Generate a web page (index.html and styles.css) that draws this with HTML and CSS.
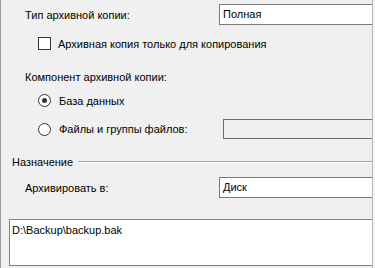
FILE: index.html
```html
<!DOCTYPE html>
<html lang="ru">
<head>
  <meta charset="UTF-8">
  <meta name="viewport" content="width=device-width, initial-scale=1.0">
  <title>Параметры архивации</title>
  <link rel="stylesheet" href="styles.css">
</head>
<body>
  <div class="panel">
    <div class="row row-field">
      <label class="field-label" for="backupType">Тип архивной копии:</label>
      <div class="combo" id="backupType">Полная</div>
    </div>

    <div class="row row-check">
      <input type="checkbox" id="copyOnly" class="check">
      <label for="copyOnly">Архивная копия только для копирования</label>
    </div>

    <div class="row row-caption">Компонент архивной копии:</div>

    <div class="row row-radio first-radio">
      <input type="radio" id="database" name="component" class="radio" checked>
      <label for="database">База данных</label>
    </div>

    <div class="row row-radio second-radio">
      <input type="radio" id="files" name="component" class="radio">
      <label class="radio-label" for="files">Файлы и группы файлов:</label>
      <div class="text-field disabled"></div>
    </div>

    <div class="group-title">Назначение</div>

    <div class="row row-field row-dest">
      <label class="field-label" for="destType">Архивировать в:</label>
      <div class="combo" id="destType">Диск</div>
    </div>

    <div class="dest-list">D:\Backup\backup.bak</div>
  </div>
</body>
</html>
```

FILE: styles.css
```css
body {
  margin: 0;
  background-color: #f7f7f7;
  font-family: "Liberation Sans", Arial, sans-serif;
  font-size: 11px;
  color: #000;
}
.panel {
  width: 371px;
  height: 268px;
  background-color: #f0f0f0;
  border-left: 1px solid #a0a0a0;
  border-right: 1px solid #b4b4b4;
  overflow: hidden;
  box-sizing: content-box;
}
.row {
  display: flex;
  align-items: center;
}
.row-field {
  margin-top: 4px;
  height: 21px;
  padding-left: 24px;
}
.field-label {
  width: 194px;
  flex-shrink: 0;
}
.combo {
  width: 170px;
  height: 21px;
  flex-shrink: 0;
  box-sizing: border-box;
  border: 1px solid #7a7a7a;
  background-color: #fff;
  padding-left: 3px;
  line-height: 19px;
}
.row-check {
  margin-top: 12px;
  height: 13px;
  padding-left: 37px;
}
.check {
  appearance: none;
  flex-shrink: 0;
  margin: 0 7px 0 0;
  width: 13px;
  height: 13px;
  border: 1px solid #333;
  background-color: #fff;
  box-sizing: border-box;
}
.row-caption {
  margin-top: 20px;
  height: 14px;
  padding-left: 24px;
}
.row-radio {
  padding-left: 37px;
}
.first-radio {
  margin-top: 10px;
  height: 13px;
}
.second-radio {
  margin-top: 12px;
  height: 20px;
}
.radio {
  appearance: none;
  flex-shrink: 0;
  margin: 0 8px 0 0;
  width: 13px;
  height: 13px;
  border: 1px solid #333;
  border-radius: 50%;
  background-color: #fff;
  box-sizing: border-box;
  position: relative;
}
.radio:checked::after {
  content: "";
  position: absolute;
  left: 3px;
  top: 3px;
  width: 5px;
  height: 5px;
  border-radius: 50%;
  background-color: #333;
}
.radio-label {
  width: 164px;
  flex-shrink: 0;
}
.text-field {
  width: 170px;
  height: 20px;
  flex-shrink: 0;
  box-sizing: border-box;
  border: 1px solid #6d6d6d;
}
.disabled {
  background-color: #f0f0f0;
}
.group-title {
  display: flex;
  align-items: center;
  margin-top: 16px;
  height: 14px;
  padding-left: 11px;
}
.group-title::after {
  content: "";
  flex: 1;
  margin-left: 5px;
  border-top: 1px solid #a0a0a0;
  border-bottom: 1px solid #fff;
}
.row-dest {
  margin-top: 8px;
}
.dest-list {
  margin: 21px 0 0 8px;
  width: 400px;
  height: 47px;
  box-sizing: border-box;
  border: 1px solid #828282;
  background-color: #fff;
  padding: 3px 2px;
  line-height: 14px;
}
```
